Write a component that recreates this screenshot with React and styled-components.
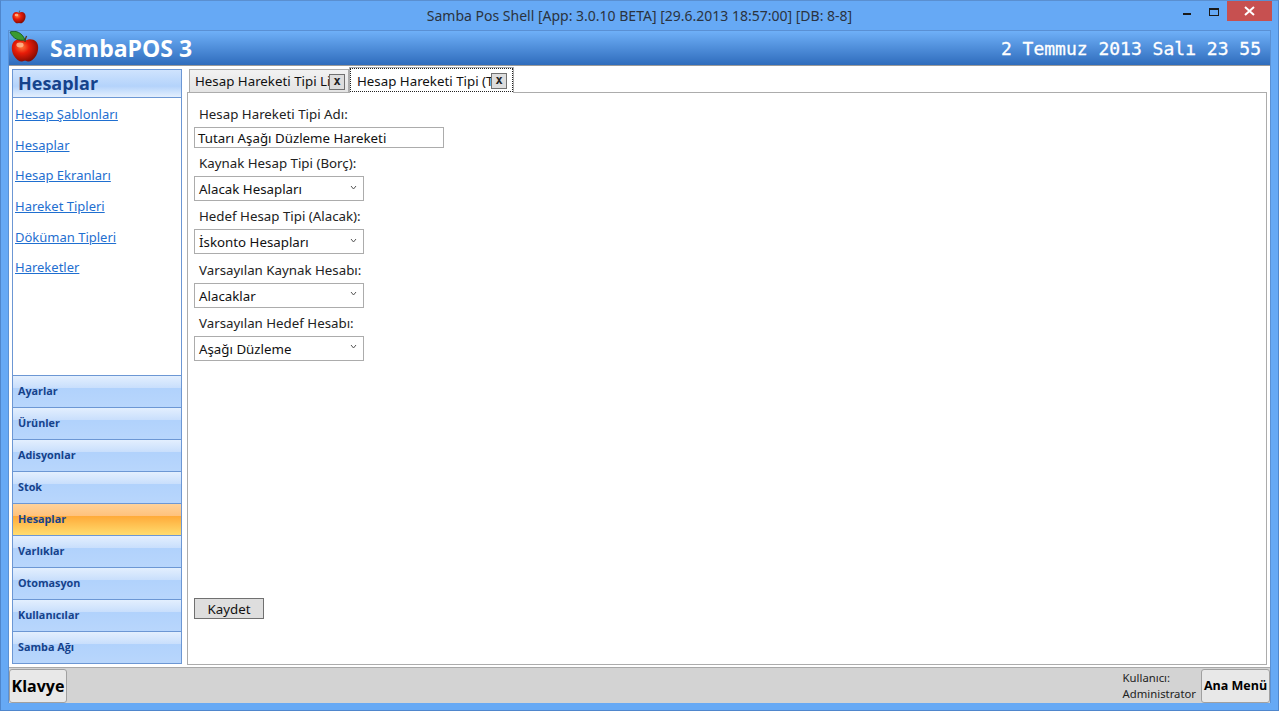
import React from "react";
import styled, { createGlobalStyle } from "styled-components";

const GlobalStyle = createGlobalStyle`
  html, body { margin: 0; padding: 0; height: 100%; overflow: hidden; background: #66a9f5; }
  #root { height: 100%; }
`;

const links = ["Hesap Şablonları", "Hesaplar", "Hesap Ekranları", "Hareket Tipleri", "Döküman Tipleri", "Hareketler"];
const sections = ["Ayarlar", "Ürünler", "Adisyonlar", "Stok", "Hesaplar", "Varlıklar", "Otomasyon", "Kullanıcılar", "Samba Ağı"];
const fields = [
  { label: "Kaynak Hesap Tipi (Borç):", value: "Alacak Hesapları" },
  { label: "Hedef Hesap Tipi (Alacak):", value: "İskonto Hesapları" },
  { label: "Varsayılan Kaynak Hesabı:", value: "Alacaklar" },
  { label: "Varsayılan Hedef Hesabı:", value: "Aşağı Düzleme" },
];

const Apple = ({ size, leaf }) => (
  <svg width={size} height={size} viewBox="0 0 32 32">
    <defs>
      <radialGradient id={`apple${size}`} cx="38%" cy="35%" r="70%">
        <stop offset="0" stopColor="#ff7a3c" />
        <stop offset="0.4" stopColor="#e81c08" />
        <stop offset="1" stopColor="#7c0a02" />
      </radialGradient>
    </defs>
    <path d="M16 10c3-2.4 8-2.6 11 .4 3 3.2 2.8 9.200.2 14-2.200 4-5.800 6.400-8.200 6.200-1.600-.2-2-.8-3-.8s-1.400.6-3 .8c-2.400.2-6-2.200-8.200-6.200-2.600-4.800-2.800-10.800.2-14 3-3 8-2.800 11-.4z" fill={`url(#apple${size})`} />
    <ellipse cx="11" cy="14" rx="3.600" ry="2.400" fill="#ffc9a0" opacity="0.75" />
    <path d="M16 11c0-2 .4-4 1.600-6" stroke="#5a3a12" strokeWidth="1.400" fill="none" />
    {leaf && <path d="M1 1c5-2 12 0 15 8C10 10 4 8 1 1z" fill="#3a9a30" stroke="#14501a" strokeWidth="0.800" />}
  </svg>
);

const App = () => (
  <Window>
    <GlobalStyle />
    <TitleBar>
      <TitleIcon><Apple size={16} /></TitleIcon>
      <TitleText>Samba Pos Shell [App: 3.0.10 BETA] [29.6.2013 18:57:00] [DB: 8-8]</TitleText>
      <WindowButtons>
        <MinButton />
        <MaxButton />
        <CloseButton>
          <svg width="11" height="10" viewBox="0 0 11 10">
            <path d="M1 1l9 8M10 1l-9 8" stroke="#fff" strokeWidth="2" />
          </svg>
        </CloseButton>
      </WindowButtons>
    </TitleBar>
    <Client>
      <Header>
        <Logo><Apple size={32} leaf /></Logo>
        <Brand>SambaPOS 3</Brand>
        <DateText>2 Temmuz 2013 Salı 23 55</DateText>
      </Header>
      <Body>
        <Sidebar>
          <SideTitle>Hesaplar</SideTitle>
          <LinkList>
            {links.map((l) => (
              <SideLink key={l}>{l}</SideLink>
            ))}
          </LinkList>
          {sections.map((s) => (
            <Section key={s} $active={s === "Hesaplar"}>{s}</Section>
          ))}
        </Sidebar>
        <Main>
          <Tabs>
            <Tab>
              <TabLabel>Hesap Hareketi Tipi Li</TabLabel>
              <TabClose>x</TabClose>
            </Tab>
            <ActiveTab>
              <TabLabel>Hesap Hareketi Tipi (T</TabLabel>
              <TabClose>x</TabClose>
            </ActiveTab>
          </Tabs>
          <Panel>
            <FieldLabel>Hesap Hareketi Tipi Adı:</FieldLabel>
            <TextBox>Tutarı Aşağı Düzleme Hareketi</TextBox>
            {fields.map((f) => (
              <React.Fragment key={f.label}>
                <FieldLabel>{f.label}</FieldLabel>
                <Combo>
                  {f.value}
                  <svg width="7" height="5" viewBox="0 0 7 5">
                    <path d="M1 1l2.500 3L6 1" stroke="#555" strokeWidth="1" fill="none" />
                  </svg>
                </Combo>
              </React.Fragment>
            ))}
            <Spacer />
            <SaveButton>Kaydet</SaveButton>
          </Panel>
        </Main>
      </Body>
      <Footer>
        <FooterButton $width={58} $size={16}>Klavye</FooterButton>
        <UserInfo>Kullanıcı:<br />Administrator</UserInfo>
        <FooterButton $width={69} $size={12.5}>Ana Menü</FooterButton>
      </Footer>
    </Client>
  </Window>
);

export default App;

const uiFont = `"Noto Sans", "Open Sans", sans-serif`;

const Window = styled.div`
  display: flex;
  flex-direction: column;
  box-sizing: border-box;
  width: 1279px;
  height: 711px;
  padding: 0 7px 7px 7px;
  background: #66a9f5;
  border: 1px solid #4f86cc;
  border-top-color: #5a8fd0;
  font-family: ${uiFont};
  overflow: hidden;
`;

const TitleBar = styled.div`
  display: flex;
  align-items: center;
  height: 29px;
  flex-shrink: 0;
  position: relative;
`;

const TitleIcon = styled.div`
  display: flex;
  margin-left: 3px;
`;

const TitleText = styled.div`
  position: absolute;
  left: 0;
  right: 0;
  text-align: center;
  font-size: 14px;
  color: #2a3340;
`;

const WindowButtons = styled.div`
  position: absolute;
  top: 0;
  right: -1px;
  display: flex;
  align-items: flex-start;
`;

const MinButton = styled.div`
  width: 8px;
  height: 2px;
  margin: 12px 18px 0 0;
  background: #1a1a1a;
`;

const MaxButton = styled.div`
  box-sizing: border-box;
  width: 10px;
  height: 8px;
  margin: 7px 8px 0 0;
  border: 1px solid #1a1a1a;
  border-top-width: 2px;
`;

const CloseButton = styled.div`
  display: flex;
  align-items: center;
  justify-content: center;
  width: 45px;
  height: 20px;
  background: #c75050;
`;

const Client = styled.div`
  flex: 1;
  display: flex;
  flex-direction: column;
  min-height: 0;
  border: 1px solid #5a90d4;
  border-bottom: none;
  background: #fff;
`;

const Header = styled.div`
  display: flex;
  align-items: center;
  position: relative;
  box-sizing: border-box;
  height: 35px;
  flex-shrink: 0;
  background: linear-gradient(#6fb0f8, #2f6cbc);
  border-bottom: 1px solid #9a9a9a;
`;

const Logo = styled.div`
  position: absolute;
  left: 0;
  top: 0;
  display: flex;
`;

const Brand = styled.div`
  margin-left: 41px;
  font-family: "Open Sans", sans-serif;
  font-size: 23px;
  font-weight: 700;
  color: #fff;
`;

const DateText = styled.div`
  margin-left: auto;
  margin-right: 9px;
  font-family: "DejaVu Sans Mono", monospace;
  font-size: 18px;
  color: #fff;
  -webkit-text-stroke: 0.300px #fff;
`;

const Body = styled.div`
  flex: 1;
  display: flex;
  min-height: 0;
  padding: 1px 3px 2px 3px;
  gap: 5px;
`;

const Sidebar = styled.div`
  display: flex;
  flex-direction: column;
  box-sizing: border-box;
  width: 170px;
  margin: 2px 0 1px 0;
  border: 1px solid #6c97d4;
  flex-shrink: 0;
`;

const SideTitle = styled.div`
  box-sizing: border-box;
  height: 28px;
  padding-left: 5px;
  line-height: 27px;
  font-family: "Open Sans", sans-serif;
  font-size: 18px;
  font-weight: 700;
  color: #15428b;
  background: linear-gradient(#cfe3fd, #b4d3fb 60%, #e4effd);
  border-bottom: 1px solid #6c97d4;
`;

const LinkList = styled.div`
  flex: 1;
  display: flex;
  flex-direction: column;
  gap: 10px;
  padding: 6px 0 0 2px;
`;

const SideLink = styled.a`
  height: 20.700px;
  line-height: 20px;
  font-size: 13px;
  color: #1f6fd0;
  text-decoration: underline;
`;

const Section = styled.div`
  box-sizing: border-box;
  height: 32px;
  padding-left: 5px;
  line-height: 30px;
  font-family: "Open Sans", sans-serif;
  font-size: 10.800px;
  font-weight: 700;
  color: #15428b;
  border-top: 1px solid #6c97d4;
  background: ${(p) =>
    p.$active
      ? "linear-gradient(#ffd29a, #ffc27c 38%, #ffab3a 40%, #ffdc6e)"
      : "linear-gradient(#e3effe, #c9dffc 38%, #b1d2fc 40%, #b8d6fc)"};
`;

const Main = styled.div`
  flex: 1;
  display: flex;
  flex-direction: column;
  min-width: 0;
`;

const Tabs = styled.div`
  display: flex;
  height: 25px;
  padding-left: 2px;
`;

const TabLabel = styled.div`
  flex: 0 0 134px;
  overflow: hidden;
  white-space: nowrap;
  font-size: 13.300px;
  line-height: 22px;
  color: #111;
`;

const TabClose = styled.div`
  box-sizing: border-box;
  width: 16px;
  height: 16px;
  margin-top: 4px;
  text-align: center;
  line-height: 13px;
  font-family: "DejaVu Sans Mono", monospace;
  font-size: 12px;
  font-weight: 700;
  color: #222;
  background: #ddd;
  border: 1px solid #707070;
`;

const Tab = styled.div`
  display: flex;
  box-sizing: border-box;
  width: 160px;
  height: 23px;
  margin-top: 2px;
  padding-left: 5px;
  background: linear-gradient(#f2f2f2, #e4e4e4);
  border: 1px solid #acacac;
  border-bottom: none;
  overflow: hidden;
`;

const ActiveTab = styled(Tab)`
  width: 165px;
  height: 26px;
  margin-top: 0;
  padding-left: 7px;
  background: #fff;
  outline: 1px dotted #222;
  outline-offset: -2px;
  position: relative;
  z-index: 1;

  ${TabLabel} {
    padding-top: 2px;
  }

  ${TabClose} {
    margin-top: 5px;
  }
`;

const Panel = styled.div`
  flex: 1;
  display: flex;
  flex-direction: column;
  align-items: flex-start;
  min-height: 0;
  padding: 7px 0 45px 6px;
  border: 1px solid #acacac;
`;

const FieldLabel = styled.div`
  height: 27px;
  padding-left: 5px;
  line-height: 28px;
  font-size: 13.300px;
  color: #222;
`;

const TextBox = styled.div`
  box-sizing: border-box;
  width: 250px;
  height: 21px;
  padding-left: 3px;
  margin-bottom: 1px;
  line-height: 20px;
  font-size: 13.300px;
  color: #111;
  border: 1px solid #acacac;
`;

const Combo = styled.div`
  display: flex;
  align-items: center;
  justify-content: space-between;
  box-sizing: border-box;
  width: 170px;
  height: 25px;
  padding: 1px 6px 0 4px;
  margin-bottom: 1.330px;
  font-size: 13.300px;
  color: #111;
  border: 1px solid #acacac;

  svg {
    margin-bottom: 4px;
  }
`;

const Spacer = styled.div`
  flex: 1;
`;

const SaveButton = styled.div`
  box-sizing: border-box;
  width: 70px;
  height: 21px;
  text-align: center;
  line-height: 20px;
  font-size: 13.300px;
  color: #111;
  background: #dedede;
  border: 1px solid #707070;
`;

const Footer = styled.div`
  display: flex;
  align-items: center;
  box-sizing: border-box;
  flex-shrink: 0;
  height: 36px;
  background: #d3d3d3;
  border-top: 1px solid #a8a8a8;
`;

const FooterButton = styled.div`
  box-sizing: border-box;
  width: ${(p) => p.$width}px;
  height: 34px;
  text-align: center;
  line-height: 32px;
  white-space: nowrap;
  font-family: "Open Sans", sans-serif;
  font-size: ${(p) => p.$size}px;
  font-weight: 700;
  color: #000;
  background: #e8e8e8;
  border: 1px solid #a0a0a0;
  border-radius: 3px;
`;

const UserInfo = styled.div`
  margin-left: auto;
  margin-right: 5px;
  font-size: 11.300px;
  line-height: 16px;
  color: #222;
`;
